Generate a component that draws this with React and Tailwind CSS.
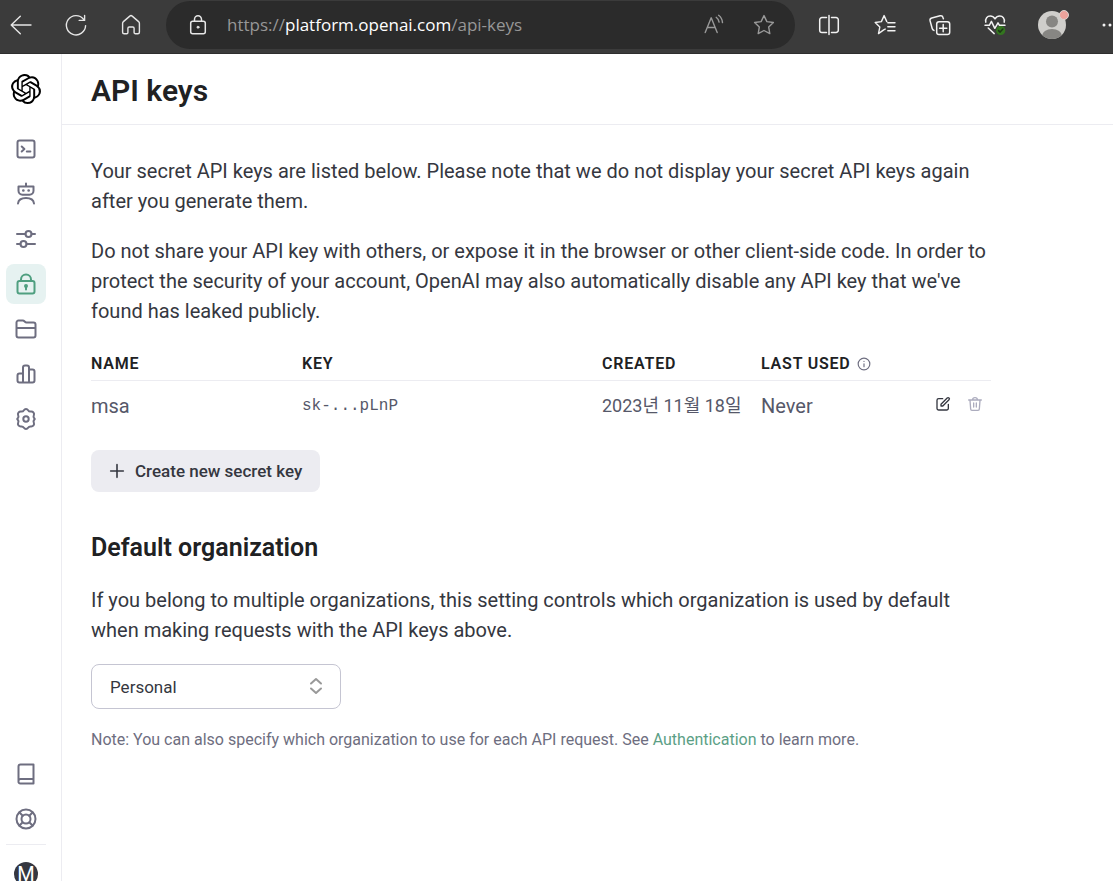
import { SiOpenai } from "react-icons/si";

function Icon({ className = "size-6", width = 2, box = 24, children }) {
  return (
    <svg
      viewBox={`0 0 ${box} ${box}`}
      className={`shrink-0 ${className}`}
      fill="none"
      stroke="currentColor"
      strokeWidth={width}
      strokeLinecap="round"
      strokeLinejoin="round"
      aria-hidden="true"
    >
      {children}
    </svg>
  );
}

const STAR = "M12 2.6l2.9 6 6.5.9-4.7 4.6 1.1 6.5-5.8-3.1-5.8 3.1 1.1-6.5L2.6 9.5l6.5-.9z";

function BrowserBar() {
  return (
    <header className="flex h-[54px] shrink-0 items-start overflow-hidden border-b border-[#2e2e2e] bg-[#3b3b3b] pt-px text-[#e6e6e6]">
      <div className="flex h-12 w-[166px] shrink-0 items-center gap-[31px] pl-[9px]">
        <button type="button" aria-label="Back">
          <Icon width={1.4}><path d="M22 12H2.2M11.3 3.2L2.2 12l9.1 8.8" /></Icon>
        </button>
        <button type="button" aria-label="Refresh">
          <Icon width={1.4}><path d="M21.6 12.6A9.6 9.6 0 1 1 19.6 6.4M20.6 2.4v5h-5.4" /></Icon>
        </button>
        <button type="button" aria-label="Home">
          <Icon width={1.4}>
            <path d="M3.6 10.2c0-.7.3-1.2.8-1.6l6.4-5.5c.7-.6 1.7-.6 2.4 0l6.4 5.5c.5.4.8.9.8 1.6v9c0 .9-.6 1.5-1.5 1.5h-2.500c-.8 0-1.300-.5-1.300-1.300v-4.100c0-.8-.5-1.300-1.300-1.300h-3.600c-.8 0-1.300.5-1.300 1.300v4.100c0 .8-.5 1.300-1.300 1.300H5.100c-.9 0-1.500-.6-1.500-1.500z" />
          </Icon>
        </button>
      </div>
      <div className="flex h-12 min-w-0 flex-1 items-center rounded-full bg-[#2b2b2b] pr-[19px] pl-5">
        <Icon width={1.5}>
          <rect x="4.7" y="8.2" width="14.6" height="12.6" rx="2" />
          <path d="M8.500 8V6.200a3.500 3.500 0 0 1 7 0V8" />
          <circle cx="12" cy="14.2" r="1" fill="currentColor" strokeWidth="1" />
        </Icon>
        <p className="min-w-0 flex-1 truncate pl-[17px] font-['Open_Sans','Noto_Sans',sans-serif] text-[17px] leading-6 text-[#979797]">
          https://<span className="text-white">platform.openai.com</span>/api-keys
        </p>
        <button type="button" aria-label="Read aloud" className="mr-[26px] text-[#999]">
          <Icon width={1.4}>
            <path d="M3.200 19.500L9.200 4.800l6 14.700M5.300 14.500h7.800M14.200 4.300c1.600 1.200 2.600 2.800 2.900 4.800M16.600 2.300c2.300 1.700 3.700 4.200 3.900 7.300" />
          </Icon>
        </button>
        <button type="button" aria-label="Add to favorites" className="text-[#999]">
          <Icon width={1.4}><path d={STAR} /></Icon>
        </button>
      </div>
      <div className="flex h-12 w-[318px] shrink-0 items-center pl-[22px] text-[#f2f2f2]">
        <button type="button" aria-label="Split screen" className="mr-8">
          <Icon width={1.5}>
            <path d="M9.500 4.500H5a2.300 2.300 0 0 0-2.300 2.300v10.400A2.300 2.300 0 0 0 5 19.500h4.500M14.500 4.500H19a2.300 2.300 0 0 1 2.300 2.300v10.400a2.300 2.300 0 0 1-2.300 2.300h-4.500M12 2.500v19" />
          </Icon>
        </button>
        <button type="button" aria-label="Favorites" className="mr-[31px]">
          <Icon width={1.4}>
            <path d="M10.700 16.900L5.500 20.600l1.300-6.500-4.600-4.600 6.200-.9 2.700-6 2.700 6M14.800 9.700H22M14.800 13.700H22M14.800 17.700H22M10.700 16.900l1.500-.8" />
          </Icon>
        </button>
        <button type="button" aria-label="Collections" className="mr-[31px]">
          <Icon width={1.5}>
            <rect x="8.7" y="8.8" width="13" height="12.7" rx="2.3" />
            <path d="M15.200 11.600v7.200M11.600 15.200h7.200M5.900 17.400a2.600 2.600 0 0 1-1.700-1.900L2.100 7.900A2.400 2.400 0 0 1 3.800 5l8.300-2.200A2.400 2.400 0 0 1 15 4.500l.4 1.300" />
          </Icon>
        </button>
        <button type="button" aria-label="Browser essentials" className="mr-[30px]">
          <Icon width={1.5}>
            <path d="M2.800 9.200C2 5.400 4.300 3.100 7.200 3.100c2 0 3.600 1 4.800 2.800 1.200-1.800 2.800-2.800 4.800-2.800 2.900 0 5.200 2.300 4.400 6.100M2 12.300h4.300l2.100-4 3.400 7 3.200-5.500 1.500 2.500H22M5.200 15l6 5.600" />
            <circle cx="17.7" cy="17.5" r="4.6" fill="#33751f" stroke="none" />
            <path d="M15.600 17.600l1.500 1.500 2.800-3" stroke="#1c3515" />
          </Icon>
        </button>
        <button type="button" aria-label="Profile" className="mr-8">
          <svg viewBox="0 0 32 32" className="size-8" aria-hidden="true">
            <defs><clipPath id="face"><circle cx="15" cy="16" r="14" /></clipPath></defs>
            <circle cx="15" cy="16" r="14" fill="#cfcecb" />
            <g fill="#878683" clipPath="url(#face)">
              <circle cx="15" cy="12.5" r="6" />
              <ellipse cx="15" cy="27" rx="10" ry="7" />
            </g>
            <circle cx="27" cy="6" r="4.5" fill="#eca39c" stroke="#d8d4d1" />
          </svg>
        </button>
        <button type="button" aria-label="Settings and more">
          <svg viewBox="0 0 20 24" className="h-6 w-5" fill="currentColor" aria-hidden="true">
            <circle cx="3" cy="12" r="1.5" /><circle cx="9" cy="12" r="1.5" /><circle cx="15" cy="12" r="1.5" />
          </svg>
        </button>
      </div>
    </header>
  );
}

const NAV = [
  {
    label: "Playground",
    art: (
      <>
        <rect x="3.5" y="3.5" width="17" height="17" rx="2" />
        <path d="M7.700 9.500l2.700 2.500-2.700 2.500M12.800 14.500h3.600" />
      </>
    ),
  },
  {
    label: "Assistants",
    art: (
      <>
        <path d="M12 1.500V4M4.500 4.500h15v4.200a4 4 0 0 1-4 4h-7a4 4 0 0 1-4-4zM4 21.500c.4-3.300 3.500-5.500 8-5.500s7.600 2.200 8 5.500" />
        <path d="M9.300 8.500h.1M14.600 8.500h.1" strokeWidth="2.6" />
      </>
    ),
  },
  {
    label: "Fine-tuning",
    art: (
      <>
        <circle cx="14.5" cy="7" r="3" /><circle cx="9.5" cy="17" r="3" />
        <path d="M3 7h8.500M17.500 7H21M3 17h3.500M12.500 17H21" />
      </>
    ),
  },
  {
    label: "API keys",
    active: true,
    art: (
      <>
        <rect x="3.5" y="9" width="17" height="12.5" rx="2" />
        <path d="M7 9V7.500a5 5 0 0 1 10 0V9M12 15v2.500" />
        <circle cx="12" cy="14" r="1" fill="currentColor" />
      </>
    ),
  },
  {
    label: "Files",
    art: <path d="M2.500 5.500a2 2 0 0 1 2-2h4.300c1.700 0 2 2 3.700 2h7a2 2 0 0 1 2 2v11a2 2 0 0 1-2 2h-15a2 2 0 0 1-2-2zM2.500 11h19" />,
  },
  {
    label: "Usage",
    art: <path d="M9 20.500v-15a2 2 0 0 1 2-2h2a2 2 0 0 1 2 2v15M9 11.500H5.500a2 2 0 0 0-2 2v5a2 2 0 0 0 2 2h13a2 2 0 0 0 2-2v-9a2 2 0 0 0-2-2H15" />,
  },
  {
    label: "Settings",
    art: (
      <>
        <path d="M9.900 3.200c1-1.600 3.200-1.600 4.200 0 .6 1 1.600 1.500 2.700 1.400 2.400-.2 3.900 1.700 3 3.700-.5 1.100-.4 1.900.3 2.700.9.900.9 1.100 0 2-.7.800-.8 1.600-.3 2.700.9 2-.6 3.900-3 3.700-1.100-.1-2.100.4-2.700 1.400-1 1.600-3.200 1.600-4.200 0-.6-1-1.600-1.500-2.700-1.400-2.400.2-3.900-1.700-3-3.700.5-1.100.4-1.900-.3-2.700-.9-.9-.9-1.100 0-2 .7-.8.8-1.600.3-2.700-.9-2 .6-3.900 3-3.700 1.100.1 2.100-.4 2.700-1.400z" />
        <circle cx="12" cy="12" r="2.7" />
      </>
    ),
  },
];

const HELP = [
  {
    label: "Documentation",
    art: <path d="M19.500 17H6.500a2 2 0 0 0-2 2V4.500a2 2 0 0 1 2-2h13v19h-13a2 2 0 0 1-2-2.500" />,
  },
  {
    label: "Help",
    art: (
      <>
        <circle cx="12" cy="12" r="9.5" /><circle cx="12" cy="12" r="4.5" />
        <path d="M5.500 5.500l3.200 3.200M18.500 5.500l-3.200 3.200M5.500 18.500l3.200-3.200M18.500 18.500l-3.200-3.200" />
      </>
    ),
  },
];

function NavLink({ label, art, active }) {
  return (
    <a
      href="#"
      aria-label={label}
      className={`flex size-10 items-center justify-center rounded-lg ${active ? "bg-[#e6f2f1] text-[#4f9f80]" : "text-[#6e6e80]"}`}
    >
      <Icon className="size-6">{art}</Icon>
    </a>
  );
}

function Sidebar() {
  return (
    <aside className="flex w-[62px] shrink-0 flex-col border-r border-[#ececf1] pl-[6px]">
      <a href="#" aria-label="OpenAI" className="mt-5 flex h-[30px] w-10 items-center justify-center text-black">
        <SiOpenai className="size-[30px]" />
      </a>
      <nav aria-label="Main" className="mt-[25px] flex flex-col gap-[5px]">
        {NAV.map((item) => <NavLink key={item.label} {...item} />)}
      </nav>
      <nav aria-label="Support" className="mt-auto flex flex-col gap-[5px]">
        {HELP.map((item) => <NavLink key={item.label} {...item} />)}
      </nav>
      <div className="mt-[5px] flex h-[37px] w-10 justify-center border-t border-[#ececf1] pt-[17px]">
        <button type="button" aria-label="Account" className="flex size-6 shrink-0 items-center justify-center rounded-full bg-[#353740] text-xl leading-6 text-white">
          M
        </button>
      </div>
    </aside>
  );
}

function KeyTable() {
  const head = "border-b border-[#ececf1] pb-1 text-left align-bottom font-semibold";
  return (
    <table className="mt-[26px] w-full table-fixed border-separate border-spacing-0">
      <colgroup>
        <col className="w-[211px]" />
        <col className="w-[300px]" />
        <col className="w-[159px]" />
        <col className="w-[140px]" />
        <col />
      </colgroup>
      <thead>
        <tr className="text-base leading-6 tracking-wider text-[#202123]">
          <th scope="col" className={head}>NAME</th>
          <th scope="col" className={head}>KEY</th>
          <th scope="col" className={head}>CREATED</th>
          <th scope="col" className={head}>
            <span className="flex items-center gap-[6px] whitespace-nowrap">
              LAST USED
              <Icon className="size-[14px] text-[#6e6e80]">
                <circle cx="12" cy="12" r="10" /><path d="M12 11.500v5M12 7.500v.1" />
              </Icon>
            </span>
          </th>
          <td className={head} />
        </tr>
      </thead>
      <tbody>
        <tr className="h-[49px] text-xl leading-[30px] text-[#565869]">
          <td>msa</td>
          <td className="font-['Liberation_Mono',monospace] text-base">sk-...pLnP</td>
          <td className="text-lg whitespace-nowrap">2023년 11월 18일</td>
          <td>Never</td>
          <td>
            <div className="flex items-center justify-end gap-4 pr-2 pb-1">
              <button type="button" aria-label="Edit key" className="text-[#353740]">
                <Icon className="size-4">
                  <path d="M11.500 4H5.500a2.500 2.500 0 0 0-2.500 2.500v12A2.500 2.500 0 0 0 5.500 21h12a2.500 2.500 0 0 0 2.500-2.500v-6M9 12.300V15h2.700L21 5.700a1.900 1.900 0 0 0-2.700-2.700z" />
                </Icon>
              </button>
              <button type="button" aria-label="Delete key" className="text-[#acacbe]">
                <Icon className="size-4">
                  <path d="M2.500 6h19M8.500 5.500C8.500 3.500 10 2.500 12 2.500s3.500 1 3.500 3M4.500 6.500l1 13a2 2 0 0 0 2 2h9a2 2 0 0 0 2-2l1-13M10 10.500v6M14 10.500v6" />
                </Icon>
              </button>
            </div>
          </td>
        </tr>
      </tbody>
    </table>
  );
}

export default function App() {
  return (
    <div className="flex h-screen flex-col overflow-hidden bg-white font-['Roboto','Noto_Sans_CJK_KR',sans-serif] text-[#353740]">
      <BrowserBar />
      <div className="flex min-h-0 flex-1">
        <Sidebar />
        <main className="min-w-0 flex-1 overflow-hidden">
          <div className="border-b border-[#ececf1] px-[29px] pt-[19px] pb-[15px]">
            <h1 className="text-[30px] leading-9 font-semibold text-[#202123]">API keys</h1>
          </div>
          <div className="max-w-[929px] pl-[29px] text-xl leading-[30px]">
            <p className="mt-[31px]">
              Your secret API keys are listed below. Please note that we do not display your secret API keys again after you generate them.
            </p>
            <p className="mt-5">
              Do not share your API key with others, or expose it in the browser or other client-side code. In order to protect the security of your account, OpenAI may also automatically disable any API key that we've found has leaked publicly.
            </p>
            <KeyTable />
            <button type="button" className="mt-5 flex h-[42px] items-center gap-[10px] rounded-lg bg-[#ececf1] px-[18px] text-[17px] leading-6 font-medium">
              <Icon className="size-4" width={2.4}><path d="M12 2.500v19M2.500 12h19" /></Icon>
              Create new secret key
            </button>
            <h2 className="mt-10 text-[25px] leading-8 font-semibold text-[#202123]">Default organization</h2>
            <p className="mt-[21px]">
              If you belong to multiple organizations, this setting controls which organization is used by default when making requests with the API keys above.
            </p>
            <div className="relative mt-[19px] w-[250px]">
              <select aria-label="Default organization" defaultValue="Personal" className="block h-[45px] w-full appearance-none rounded-lg border border-[#c5c5d2] bg-white px-[18px] text-[17px] leading-6">
                <option>Personal</option>
              </select>
              <Icon className="pointer-events-none absolute top-3 right-[15px] size-5 text-[#999]" box={20} width={2}>
                <path d="M5 7.500L10 3l5 4.500M5 12.500L10 17l5-4.500" />
              </Icon>
            </div>
            <p className="mt-[19px] text-base leading-6 text-[#6e6e80]">
              Note: You can also specify which organization to use for each API request. See{" "}
              <a href="#" className="text-[#5c9f86]">Authentication</a> to learn more.
            </p>
          </div>
        </main>
      </div>
    </div>
  );
}
